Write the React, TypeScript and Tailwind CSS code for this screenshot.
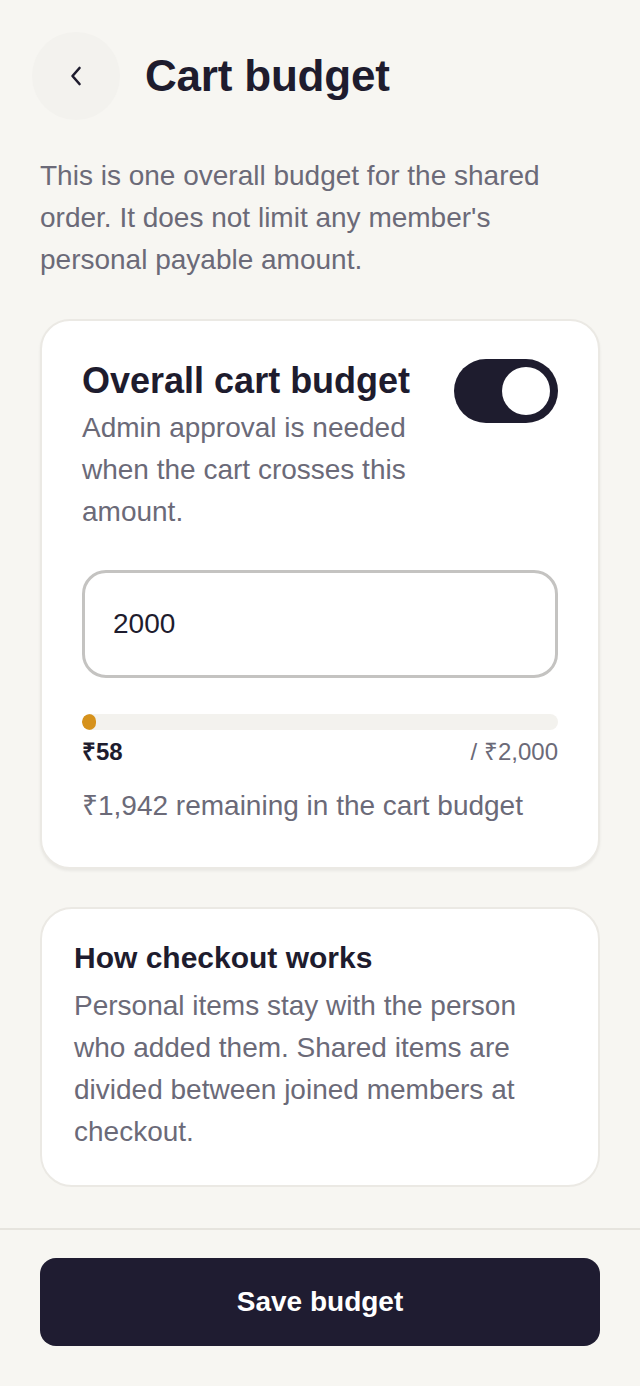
import { useState } from "react"

const font = { fontFamily: '"Liberation Sans", Arial, sans-serif' }

const BackIcon = () => (
  <svg width="14" height="22" viewBox="0 0 14 22" fill="none">
    <path d="M10.5 3 L3.5 11 L10.5 19" stroke="#1e1c2e" strokeWidth="2.6" strokeLinecap="round" strokeLinejoin="round" />
  </svg>
)

const Toggle = ({ on, onChange }: { on: boolean; onChange: (v: boolean) => void }) => (
  <button
    onClick={() => onChange(!on)}
    className={`flex h-16 w-[104px] shrink-0 items-center rounded-full p-2 ${on ? "justify-end bg-[#1e1c2e]" : "justify-start bg-[#d6d4ce]"}`}
  >
    <span className="block h-12 w-12 rounded-full bg-white" />
  </button>
)

export default function App() {
  const [enabled, setEnabled] = useState(true)
  const [budget, setBudget] = useState("2000")
  const spent = 58
  const limit = Number(budget) || 0
  const pct = limit > 0 ? Math.min(100, (spent / limit) * 100) : 0
  const fmt = (n: number) => "₹" + n.toLocaleString("en-IN")

  return (
    <div className="flex min-h-screen flex-col bg-[#f7f6f2] text-[#1e1c2e]" style={font}>
      <main className="flex flex-col px-10 pt-8 pb-[41px]">
        {/* header */}
        <div className="-ml-2 flex items-center gap-[25px]">
          <button className="flex h-[88px] w-[88px] items-center justify-center rounded-full bg-[#f3f2ee]">
            <BackIcon />
          </button>
          <h1 className="text-[44px] font-bold leading-none tracking-[-0.2px]">Cart budget</h1>
        </div>

        <p className="mt-[35px] text-[28px] leading-[42px] text-[#6b6a78]">
          This is one overall budget for the shared order. It does not limit any member's personal payable amount.
        </p>

        {/* budget card */}
        <section className="mt-[38px] rounded-[30px] border-2 border-[#ebe9e4] bg-white px-10 pt-[38px] pb-10 shadow-[0_2px_3px_rgba(0,0,0,0.06)]">
          <div className="flex items-start justify-between gap-6">
            <div>
              <h2 className="text-[36px] font-bold leading-[44px]">Overall cart budget</h2>
              <p className="mt-1 text-[28px] leading-[42px] text-[#6b6a78]">
                Admin approval is needed when the cart crosses this amount.
              </p>
            </div>
            <Toggle on={enabled} onChange={setEnabled} />
          </div>

          <input
            value={budget}
            onChange={(e) => setBudget(e.target.value)}
            className="mt-[37px] h-[108px] w-full rounded-[24px] border-[3px] border-[#c4c3c1] bg-white px-7 text-[28px] text-[#1e1c2e] outline-none"
            style={font}
          />

          <div className="mt-9 h-4 w-full overflow-hidden rounded-full bg-[#f3f2ee]">
            <div className="h-full min-w-[14px] rounded-full bg-[#d6921c]" style={{ width: `${pct}%` }} />
          </div>
          <div className="mt-[6px] flex items-center justify-between text-[24px] leading-8">
            <span className="font-bold">{fmt(spent)}</span>
            <span className="text-[#6b6a78]">/ {fmt(limit)}</span>
          </div>
          <p className="mt-[17px] text-[28px] leading-[42px] text-[#6b6a78]">
            {fmt(Math.max(0, limit - spent))} remaining in the cart budget
          </p>
        </section>

        {/* info card */}
        <section className="mt-[38px] rounded-[32px] border-2 border-[#ebe9e4] bg-white px-8 pt-[30px] pb-8">
          <h3 className="text-[30px] font-bold leading-[38px]">How checkout works</h3>
          <p className="mt-2 text-[28px] leading-[42px] text-[#6b6a78]">
            Personal items stay with the person who added them. Shared items are divided between joined members at checkout.
          </p>
        </section>
      </main>

      <footer className="mt-auto border-t-2 border-[#e6e4de] px-10 pt-7 pb-10">
        <button className="h-[88px] w-full rounded-2xl bg-[#1f1c31] text-[28px] font-bold text-white" style={font}>
          Save budget
        </button>
      </footer>
    </div>
  )
}
